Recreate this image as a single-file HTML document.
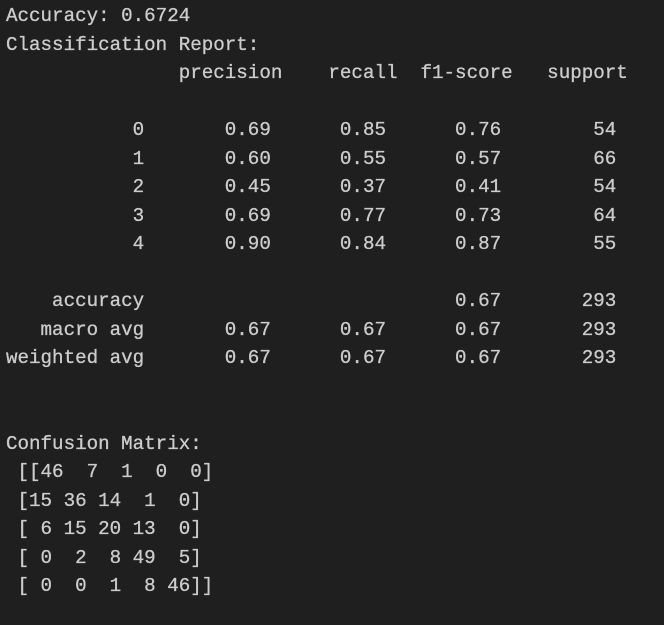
<!DOCTYPE html>
<html><head><meta charset="utf-8"><style>
html,body{margin:0;padding:0;background:#1f1f1f;width:664px;height:625px;overflow:hidden}
pre{margin:0;position:absolute;left:6px;top:2px;font-family:"Liberation Mono",monospace;font-size:19.2px;line-height:28.5px;color:#cccccc;-webkit-text-stroke:0.3px #cccccc;}
</style></head><body><pre>Accuracy: 0.6724
Classification Report:
               precision    recall  f1-score   support

           0       0.69      0.85      0.76        54
           1       0.60      0.55      0.57        66
           2       0.45      0.37      0.41        54
           3       0.69      0.77      0.73        64
           4       0.90      0.84      0.87        55

    accuracy                           0.67       293
   macro avg       0.67      0.67      0.67       293
weighted avg       0.67      0.67      0.67       293


Confusion Matrix:
 [[46  7  1  0  0]
 [15 36 14  1  0]
 [ 6 15 20 13  0]
 [ 0  2  8 49  5]
 [ 0  0  1  8 46]]</pre></body></html>
